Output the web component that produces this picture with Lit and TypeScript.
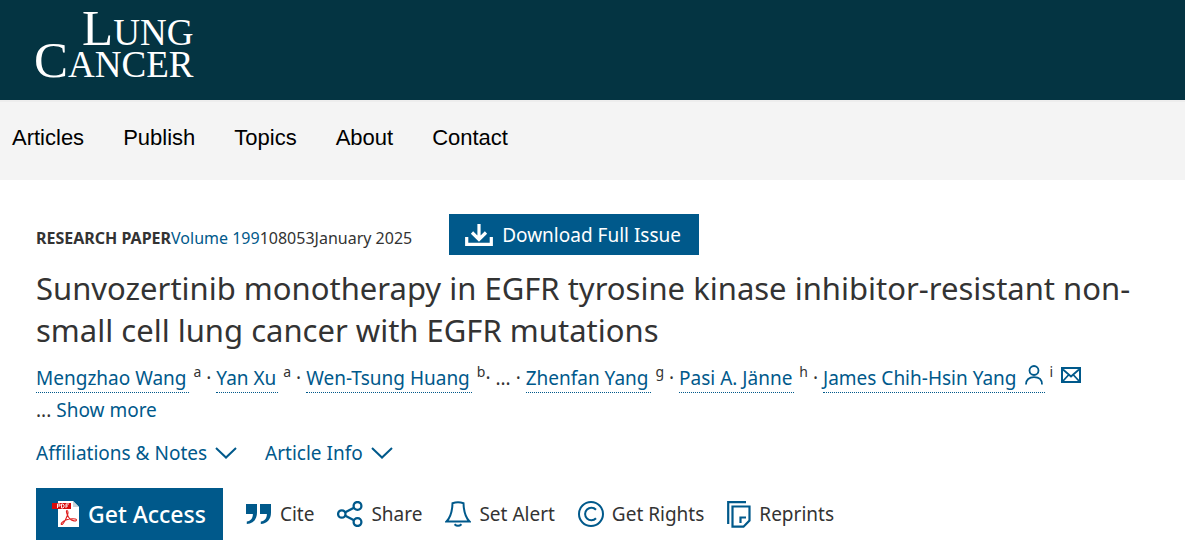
import { LitElement, html, css, svg } from "lit";
import { customElement } from "lit/decorators.js";

const icons = {
  download: svg`<svg class="icon download" viewBox="0 0 28 22" fill="none" stroke="currentColor" stroke-width="3.2"><path d="M14 0v15M7 8.500l7 7 7-7"/><path d="M1.700 13v7.400h24.600V13"/></svg>`,
  chevron: svg`<svg class="icon chevron" viewBox="0 0 22 12" fill="none" stroke="currentColor" stroke-width="2"><path d="M1 1l10 9.500L21 1"/></svg>`,
  person: svg`<svg class="icon person" viewBox="0 0 18 20" fill="none" stroke="currentColor" stroke-width="1.800"><circle cx="9" cy="5.500" r="4.500"/><path d="M1 19.500c0-5 3.200-7.300 8-7.300s8 2.300 8 7.300"/></svg>`,
  mail: svg`<svg class="icon mail" viewBox="0 0 20 16" fill="none" stroke="currentColor" stroke-width="2"><path d="M1 1h18v14H1z"/><path d="M2 2.500L10 9.500l8-7M2 14l5.500-6M18 14l-5.500-6" stroke-width="1.800"/></svg>`,
  pdf: svg`<svg class="icon pdf" viewBox="0 0 28 28"><path d="M6 1h15l6 6v20H6z" fill="#fff"/><path d="M21 1v6h6z" fill="#cbd3d8"/><path d="M0 3h19v6H0z" fill="#d90b0b"/><path d="M5.500 8V4h2.500v2H5.500M9.500 4v4h1.500l1-1V5l-1-1zM14 8V4h3M14 6h2" fill="none" stroke="#fff" stroke-width=".9"/><path d="M15 10.500c-1.700 0 .8 6.500 3 8.500 2 1.800 6.500 2.800 6.500 1 0-1.700-6.500-1.500-10.500 0-4 1.400-5.500 4-4.500 4.500 1.500.7 6.500-9 6.500-12 0-1.200-.4-2-1-2z" fill="none" stroke="#e02020" stroke-width="1.100"/></svg>`,
  cite: svg`<svg class="icon" viewBox="0 0 26 26" fill="currentColor"><path d="M0 3h11v8.500c0 7-4 11-10.200 11.500v-2.500c4-.6 5.900-2.800 6.100-7.500H0zM14 3h11v8.500c0 7-4 11-10.200 11.500v-2.500c4-.6 5.900-2.800 6.100-7.500H14z"/></svg>`,
  share: svg`<svg class="icon" viewBox="0 0 26 26" fill="none" stroke="currentColor" stroke-width="2.300"><circle cx="4.800" cy="13" r="3.700"/><circle cx="20.500" cy="4.900" r="3.900"/><circle cx="20.500" cy="21.100" r="3.900"/><path d="M8.300 11.200l8.700-4.500M8.300 14.800l8.700 4.500"/></svg>`,
  bell: svg`<svg class="icon" viewBox="0 0 26 26" fill="none" stroke="currentColor" stroke-width="2"><path d="M7.500 2.200Q13 .4 18.500 2.200C18.800 12 20.500 16.500 24.500 20.500h-23C5.500 16.500 7.200 12 7.500 2.200z"/><path d="M9.500 23.200q3.500 3.200 7 0"/></svg>`,
  rights: svg`<svg class="icon" viewBox="0 0 26 26" fill="none" stroke="currentColor" stroke-width="2"><circle cx="13" cy="13" r="12"/><path d="M18 8.700a6.300 6.300 0 1 0 0 8.600"/></svg>`,
  reprints: svg`<svg class="icon reprints" viewBox="0 0 24 27" fill="none" stroke="currentColor" stroke-width="2.200"><path d="M1.200 23V1.200H19"/><path d="M5.500 5.500H22.500v14l-6 6.200h-11z"/><path d="M13.500 22v-5.500h5.500"/></svg>`,
};

interface Author {
  name: string;
  note: string;
  corresponding?: boolean;
}

const leading: Author[] = [
  { name: "Mengzhao Wang", note: "a" },
  { name: "Yan Xu", note: "a" },
  { name: "Wen-Tsung Huang", note: "b" },
];
const trailing: Author[] = [
  { name: "Zhenfan Yang", note: "g" },
  { name: "Pasi A. Jänne", note: "h" },
  { name: "James Chih-Hsin Yang", note: "i", corresponding: true },
];

@customElement("app-root")
export class AppRoot extends LitElement {
  static styles = css`
    :host {
      display: block;
      background: #fff;
      color: #333;
      font-family: "Noto Sans", sans-serif;
      font-size: 19px;
    }
    a { color: #00598b; text-decoration: none; }
    button { font: inherit; border: 0; margin: 0; padding: 0; background: none; cursor: pointer; }
    .icon { display: block; width: 26px; height: 26px; flex: none; }
    .banner { display: flex; background: #043442; padding: 17px 34px 19px; }
    .logo {
      display: flex;
      flex-direction: column;
      align-items: flex-end;
      color: #fff;
      font-family: "Liberation Serif", serif;
      font-size: 37px;
      line-height: 32px;
    }
    .logo .cap { font-size: 51px; line-height: 0; }
    .nav { background: #f4f4f4; border-top: 2px solid #ededed; }
    .nav ul {
      display: flex;
      gap: 39px;
      margin: 0;
      padding: 0 12px 6px;
      list-style: none;
      font: 22px/72px "Liberation Sans", sans-serif;
    }
    .nav a { color: #000; }
    .article { padding: 34px 36px 3px; }
    .meta { display: flex; align-items: center; gap: 37px; font-size: 16px; line-height: 24px; }
    .meta p { margin: 6px 0 0; }
    .download-btn {
      display: flex;
      align-items: center;
      gap: 9px;
      height: 41px;
      padding: 0 18px 0 16px;
      background: #00598b;
      color: #fff;
      font-size: 19px;
    }
    .download { width: 28px; height: 22px; }
    h1 { margin: 12px 0 11px; font-size: 31px; line-height: 42px; font-weight: 400; }
    .authors { line-height: 32px; }
    .authors p { margin: 0; }
    .name { display: inline-block; line-height: 28px; padding-right: 2px; border-bottom: 1px dotted #00598b; }
    .name .icon, .mail { display: inline-block; }
    .person { width: 18px; height: 20px; margin-left: 8px; }
    .mail { width: 20px; height: 16px; margin-left: 3px; vertical-align: 2px; }
    sup { font-size: 14px; line-height: 0; vertical-align: 8px; }
    .toggles { display: flex; gap: 28px; margin: 14px 0 22px; }
    .toggles button { display: flex; align-items: center; gap: 8px; color: #00598b; line-height: 26px; }
    .chevron { width: 22px; height: 12px; }
    .actions { display: flex; align-items: center; gap: 23px; }
    .actions button { display: flex; align-items: center; gap: 8px; color: #333; }
    .actions .icon { color: #00598b; }
    .actions .access {
      height: 52px;
      padding: 0 17px 0 16px;
      background: #00598b;
      color: #fff;
      font-size: 23px;
      font-weight: 500;
    }
    .actions .pdf { width: 28px; height: 28px; }
    .actions .reprints { width: 24px; height: 27px; }
  `;

  private author(a: Author) {
    return html`<a class="name" href="#">${a.name}${a.corresponding ? icons.person : ""}</a> <sup>${a.note}</sup>`;
  }

  private action(label: string, icon: unknown) {
    return html`<button type="button">${icon}<span>${label}</span></button>`;
  }

  render() {
    return html`
      <header>
        <div class="banner">
          <a class="logo" href="#"><span><span class="cap">L</span>UNG</span><span><span class="cap">C</span>ANCER</span></a>
        </div>
        <nav class="nav">
          <ul>${["Articles", "Publish", "Topics", "About", "Contact"].map((t) => html`<li><a href="#">${t}</a></li>`)}</ul>
        </nav>
      </header>
      <main class="article">
        <div class="meta">
          <p><b>RESEARCH PAPER</b><a href="#">Volume 199</a>108053January 2025</p>
          <button class="download-btn" type="button">${icons.download}<span>Download Full Issue</span></button>
        </div>
        <h1>Sunvozertinib monotherapy in EGFR tyrosine kinase inhibitor-resistant non-small cell lung cancer with EGFR mutations</h1>
        <div class="authors">
          <p>${this.author(leading[0])} · ${this.author(leading[1])} · ${this.author(leading[2])}· ... · ${this.author(trailing[0])} · ${this.author(trailing[1])} · ${this.author(trailing[2])} <a href="#" aria-label="Email">${icons.mail}</a></p>
          <p>... <a href="#">Show more</a></p>
        </div>
        <div class="toggles">
          <button type="button">Affiliations &amp; Notes ${icons.chevron}</button>
          <button type="button">Article Info ${icons.chevron}</button>
        </div>
        <div class="actions">
          <button class="access" type="button">${icons.pdf}<span>Get Access</span></button>
          ${this.action("Cite", icons.cite)}
          ${this.action("Share", icons.share)}
          ${this.action("Set Alert", icons.bell)}
          ${this.action("Get Rights", icons.rights)}
          ${this.action("Reprints", icons.reprints)}
        </div>
      </main>
    `;
  }
}
